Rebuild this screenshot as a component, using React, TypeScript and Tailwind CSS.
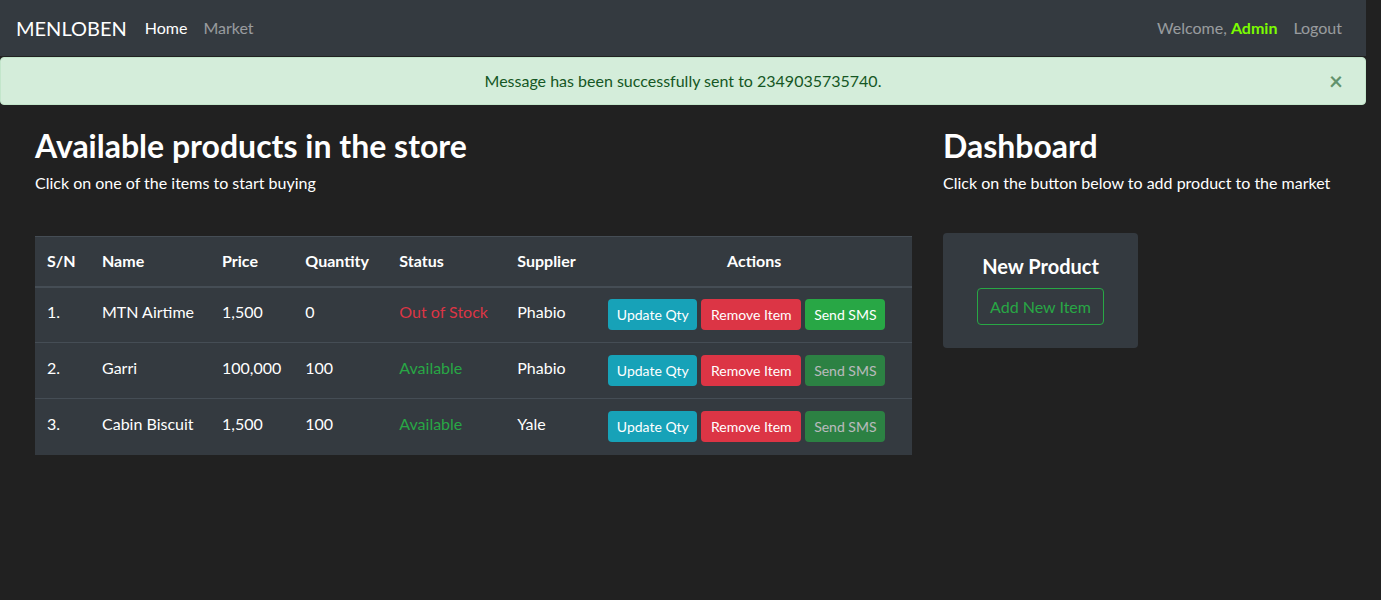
import React from 'react';

type Product = {
  sn: string;
  name: string;
  price: string;
  qty: string;
  available: boolean;
  supplier: string;
};

const products: Product[] = [
  { sn: '1.', name: 'MTN Airtime', price: '1,500', qty: '0', available: false, supplier: 'Phabio' },
  { sn: '2.', name: 'Garri', price: '100,000', qty: '100', available: true, supplier: 'Phabio' },
  { sn: '3.', name: 'Cabin Biscuit', price: '1,500', qty: '100', available: true, supplier: 'Yale' },
];

const Navbar = () => (
  <nav className="flex h-14 items-center bg-[#343a40] px-4">
    <span className="mr-[10px] text-xl text-white">MENLOBEN</span>
    <a className="px-2 text-white">Home</a>
    <a className="px-2 text-white/50">Market</a>
    <div className="flex-grow" />
    <span className="px-2 text-white/50">
      Welcome, <b className="font-bold text-[#7cfc00]">Admin</b>
    </span>
    <a className="px-2 text-white/50">Logout</a>
  </nav>
);

const Alert = () => (
  <div className="relative mt-px flex h-12 items-center justify-center rounded border border-[#c3e6cb] bg-[#d4edda] text-[#155724]">
    Message has been successfully sent to 2349035735740.
    <span className="absolute right-[22px] top-[11px] text-2xl leading-none font-bold text-[#155724]/60">×</span>
  </div>
);

const ProductTable = () => (
  <table className="w-full border-collapse bg-[#343a40] whitespace-nowrap text-white">
    <thead>
      <tr className="border-t border-[#454d55]">
        <th className="h-[50px] w-[55px] border-b-2 border-[#454d55] px-3 text-left font-bold">S/N</th>
        <th className="w-[120px] border-b-2 border-[#454d55] px-3 text-left font-bold">Name</th>
        <th className="w-[83px] border-b-2 border-[#454d55] px-3 text-left font-bold">Price</th>
        <th className="w-[94px] border-b-2 border-[#454d55] px-3 text-left font-bold">Quantity</th>
        <th className="w-[118px] border-b-2 border-[#454d55] px-3 text-left font-bold">Status</th>
        <th className="w-[91px] border-b-2 border-[#454d55] px-3 text-left font-bold">Supplier</th>
        <th className="border-b-2 border-[#454d55] px-3 text-center font-bold">Actions</th>
      </tr>
    </thead>
    <tbody>
      {products.map((p, i) => (
        <tr key={p.sn} className={i > 0 ? 'border-t border-[#454d55]' : ''}>
          <td className="h-14 px-3 pb-1.5 align-middle">{p.sn}</td>
          <td className="px-3 pb-1.5">{p.name}</td>
          <td className="px-3 pb-1.5">{p.price}</td>
          <td className="px-3 pb-1.5">{p.qty}</td>
          <td className={p.available ? 'px-3 pb-1.5 text-[#28a745]' : 'px-3 pb-1.5 text-[#dc3545]'}>
            {p.available ? 'Available' : 'Out of Stock'}
          </td>
          <td className="px-3 pb-1.5">{p.supplier}</td>
          <td className="px-3">
            <div className="flex gap-1">
              <button className="h-[31px] w-[89px] rounded bg-[#17a2b8] text-sm text-white">Update Qty</button>
              <button className="h-[31px] w-[100px] rounded bg-[#dc3545] text-sm text-white">Remove Item</button>
              <button
                className={
                  p.available
                    ? 'h-[31px] w-[80px] rounded bg-[#28a745] text-sm text-white opacity-65'
                    : 'h-[31px] w-[80px] rounded bg-[#28a745] text-sm text-white'
                }
              >
                Send SMS
              </button>
            </div>
          </td>
        </tr>
      ))}
    </tbody>
  </table>
);

export default function App() {
  return (
    <div className="min-h-[600px] bg-[#212121] font-['Lato',sans-serif] text-base text-white">
      <div className="w-[1366px]">
        <Navbar />
        <Alert />
        <div className="flex px-[35px] pt-[21px]">
          <div className="w-[877px] shrink-0">
            <h1 className="text-[32px] leading-tight font-bold">Available products in the store</h1>
            <p className="mt-[5px]">Click on one of the items to start buying</p>
            <div className="mt-[41px]">
              <ProductTable />
            </div>
          </div>
          <div className="ml-[31px] shrink-0">
            <h1 className="text-[32px] leading-tight font-bold">Dashboard</h1>
            <p className="mt-[5px]">Click on the button below to add product to the market</p>
            <div className="mt-[38px] flex h-[115px] w-[195px] flex-col items-center rounded bg-[#343a40] pt-[19px]">
              <h5 className="text-xl font-bold">New Product</h5>
              <button className="mt-2 h-[37px] rounded border border-[#28a745] px-3 text-[#28a745]">Add New Item</button>
            </div>
          </div>
        </div>
      </div>
    </div>
  );
}
